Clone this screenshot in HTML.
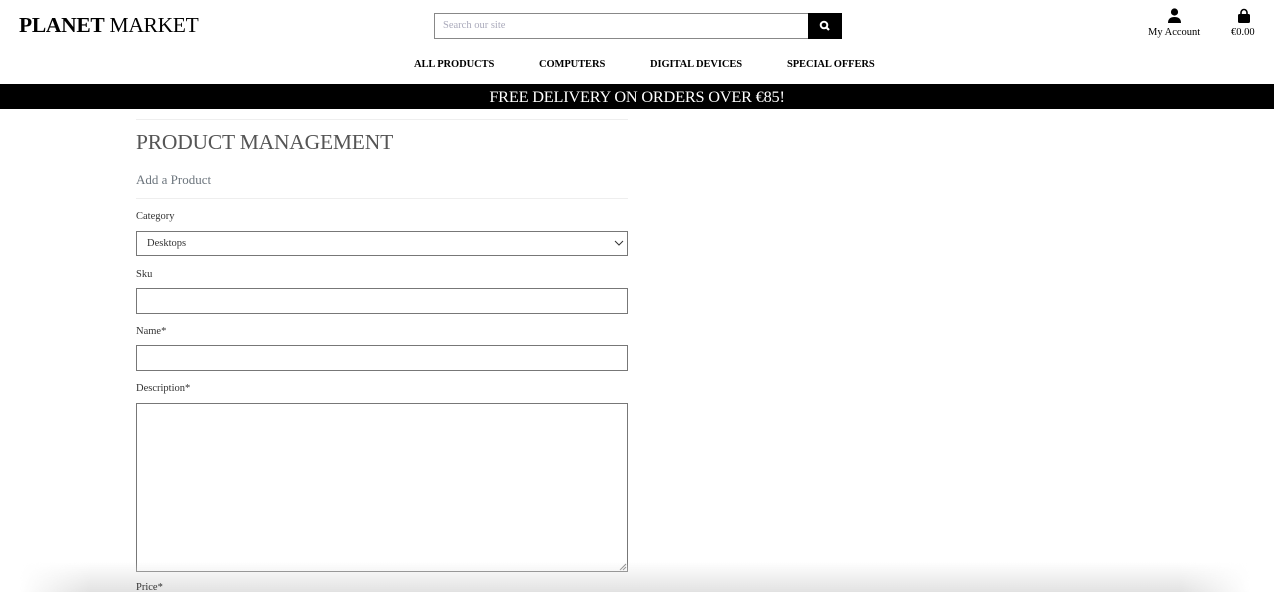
<!DOCTYPE html>
<html style="overflow:hidden;height:592px"><head><meta charset="utf-8"><style>
*{box-sizing:border-box;margin:0;padding:0}
body{width:1274px;height:592px;overflow:hidden;background:#fff;font-family:"Liberation Serif",serif;position:relative;color:#000}
.abs{position:absolute}
.logo{left:19px;top:13px;font-size:21.5px;white-space:nowrap;letter-spacing:-0.3px}
.search{left:434px;top:13px;width:375px;height:26px;border:1px solid #888;font-size:10.5px;color:#aab;padding:6px 8px}
.sbtn{left:808px;top:13px;width:34px;height:26px;background:#000}
.nav{top:59px;font-size:10.5px;font-weight:bold;white-space:nowrap;letter-spacing:-0.1px}
.banner{left:0;top:84px;width:1274px;height:25px;background:#000;color:#fff;font-size:16.3px;text-align:center;line-height:25px;letter-spacing:-0.2px}
.hr{left:136px;width:492px;height:1px;background:#eee}
.lbl{left:136px;font-size:10.5px;color:#333}
.inp{left:136px;width:492px;border:1px solid #777;background:#fff}
.shadow{left:0;top:562px;width:1274px;height:30px;background:linear-gradient(to bottom,rgba(228,228,228,0),#e2e2e2);
-webkit-mask-image:linear-gradient(to right,transparent 20px,#000 90px,#000 1180px,transparent 1250px);mask-image:linear-gradient(to right,transparent 20px,#000 90px,#000 1180px,transparent 1250px)}
</style></head><body>
<div class="abs logo"><b>PLANET</b> MARKET</div>
<div class="abs search">Search our site</div>
<div class="abs sbtn"><svg width="34" height="26" viewBox="0 0 34 26"><circle cx="16" cy="12" r="3.3" stroke="#fff" stroke-width="2" fill="none"/><line x1="18.5" y1="14.5" x2="21" y2="17" stroke="#fff" stroke-width="2.2"/></svg></div>
<svg class="abs" style="left:1167px;top:8px" width="15" height="16" viewBox="0 0 15 16"><circle cx="7.5" cy="4" r="3.6"/><path d="M1 15 Q1 9 7.5 9 Q14 9 14 15 Z"/></svg>
<div class="abs" style="left:1148px;top:27px;font-size:10.5px">My Account</div>
<svg class="abs" style="left:1237px;top:8px" width="14" height="16" viewBox="0 0 14 16"><path d="M4 6V4.5a3 3 0 0 1 6 0V6" stroke="#000" stroke-width="1.6" fill="none"/><rect x="1" y="6" width="12" height="9" rx="1.5"/></svg>
<div class="abs" style="left:1231px;top:27px;font-size:10.5px">€0.00</div>
<div class="abs nav" style="left:414px">ALL PRODUCTS</div>
<div class="abs nav" style="left:539px">COMPUTERS</div>
<div class="abs nav" style="left:650px">DIGITAL DEVICES</div>
<div class="abs nav" style="left:787px">SPECIAL OFFERS</div>
<div class="abs banner">FREE DELIVERY ON ORDERS OVER €85!</div>
<div class="abs hr" style="top:119px"></div>
<div class="abs" style="left:136px;top:130px;font-size:21.5px;color:#555;letter-spacing:-0.2px">PRODUCT MANAGEMENT</div>
<div class="abs" style="left:136px;top:172px;font-size:13px;color:#6c757d">Add a Product</div>
<div class="abs hr" style="top:198px"></div>
<div class="abs lbl" style="top:211px">Category</div>
<div class="abs inp" style="top:231px;height:25px;font-size:10.5px;padding:6px 10px;color:#333">Desktops
<svg class="abs" style="right:3px;top:8px" width="10" height="7" viewBox="0 0 10 7"><path d="M1 1l4 4 4-4" stroke="#333" fill="none"/></svg></div>
<div class="abs lbl" style="top:269px">Sku</div>
<div class="abs inp" style="top:288px;height:26px"></div>
<div class="abs lbl" style="top:326px">Name*</div>
<div class="abs inp" style="top:345px;height:26px"></div>
<div class="abs lbl" style="top:383px">Description*</div>
<div class="abs inp" style="top:403px;height:169px"></div>
<svg class="abs" style="left:619px;top:563px" width="8" height="8"><path d="M1 7L7 1M4 7L7 4" stroke="#888"/></svg>
<div class="abs shadow"></div>
<div class="abs lbl" style="top:582px;line-height:12px">Price*</div>
</body></html>
